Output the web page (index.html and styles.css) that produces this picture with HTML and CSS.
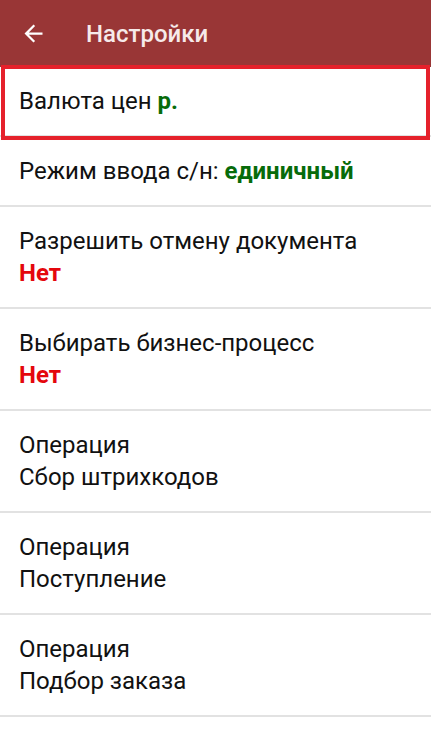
FILE: index.html
```html
<!DOCTYPE html>
<html lang="ru">
<head>
    <meta charset="UTF-8">
    <meta name="viewport" content="width=device-width, initial-scale=1.0">
    <title>Настройки</title>
    <link rel="stylesheet" href="styles.css">
</head>
<body>
    <!-- верхняя панель -->
    <div class="toolbar">
        <svg class="back-icon" viewBox="0 0 24 24" width="24" height="24">
            <path d="M20 11H7.83l5.59-5.59L12 4l-8 8 8 8 1.41-1.41L7.83 13H20v-2z" fill="#fff"/>
        </svg>
        <div class="toolbar-title">Настройки</div>
    </div>

    <div class="settings-list">
        <div class="row highlight">Валюта цен <span class="value-green">р.</span></div>
        <div class="row">Режим ввода с/н: <span class="value-green">единичный</span></div>
        <div class="row">
            <div>Разрешить отмену документа</div>
            <div class="value-red">Нет</div>
        </div>
        <div class="row">
            <div>Выбирать бизнес-процесс</div>
            <div class="value-red">Нет</div>
        </div>
        <div class="row">
            <div>Операция</div>
            <div>Сбор штрихкодов</div>
        </div>
        <div class="row">
            <div>Операция</div>
            <div>Поступление</div>
        </div>
        <div class="row">
            <div>Операция</div>
            <div>Подбор заказа</div>
        </div>
    </div>
</body>
</html>
```

FILE: styles.css
```css
body {
    font-family: Roboto, "Noto Sans", sans-serif;
    margin: 0;
    padding: 0;
    background-color: #fff;
    color: #111;
}
.toolbar {
    display: flex;
    align-items: center;
    height: 67px;
    background-color: #993636;
    padding-left: 20px;
}
.back-icon {
    width: 27px;
    height: 27px;
}
.toolbar-title {
    margin-left: 39px;
    font-size: 24px;
    font-weight: 500;
    color: #f6eaea;
}
.settings-list {
    display: flex;
    flex-direction: column;
}
/* строка настроек */
.row {
    position: relative;
    padding: 18px 19px;
    font-size: 24px;
    line-height: 32px;
    border-bottom: 2px solid #e2e2e2;
}
.value-green {
    color: #076b0a;
    font-weight: bold;
}
.value-red {
    color: #e4070d;
    font-weight: bold;
}
/* красная рамка выделения */
.highlight::after {
    content: "";
    position: absolute;
    top: -2px;
    left: 1px;
    right: 1px;
    bottom: -5px;
    border: 4px solid #e5212b;
}
```
